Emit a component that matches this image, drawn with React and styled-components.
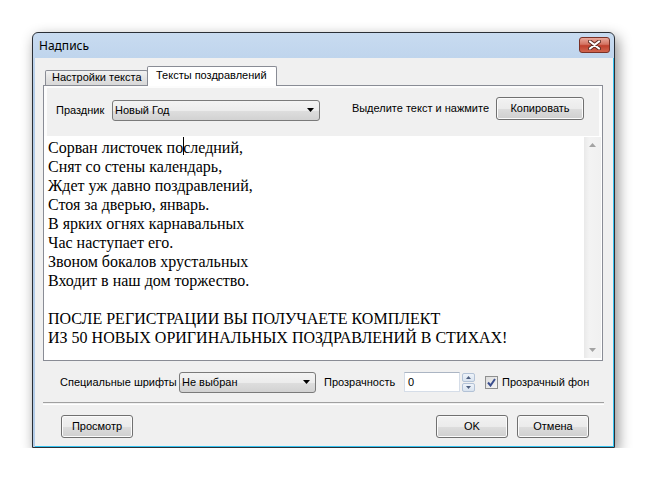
import React from 'react';
import styled, { createGlobalStyle } from 'styled-components';

const GlobalStyle = createGlobalStyle`
  body {
    margin: 0;
    background: #ffffff;
    font-family: "Liberation Sans", Arial, sans-serif;
  }
`;

const Page = styled.div`
  padding: 32px 0 0 32px;
`;

const Window = styled.div`
  width: 583px;
  height: 416px;
  box-sizing: border-box;
  border: 1px solid #2a2f36;
  border-radius: 6px 6px 0 0;
  background: linear-gradient(#c8dbf0, #b3cce8 60px, #b3cce8);
  padding: 0 0 0 2px;
  display: flex;
  flex-direction: column;
  box-shadow: 3px 5px 14px rgba(0, 0, 0, 0.45);
`;

const TitleBar = styled.div`
  height: 25px;
  display: flex;
  align-items: flex-start;
  margin-left: -2px;
  padding: 0 4px 0 6px;
`;

const Title = styled.div`
  font-family: "Noto Sans", "Open Sans", sans-serif;
  font-size: 12px;
  line-height: 16px;
  margin-top: 5px;
  color: #000;
  flex: 1;
`;

const CloseButton = styled.div`
  width: 31px;
  height: 16px;
  margin-top: 4px;
  box-sizing: border-box;
  border: 1px solid #7a3126;
  border-radius: 3px;
  background: linear-gradient(#e9a99c, #d47362 45%, #c0402d 55%, #d0654f);
  display: flex;
  align-items: center;
  justify-content: center;
`;

const Client = styled.div`
  width: 578px;
  height: 388px;
  background: #f0f0f0;
  border-right: 1px solid #35c2f0;
  border-bottom: 1px solid #35c2f0;
  display: flex;
  flex-direction: column;
  padding: 8px 0 0 0;
  box-sizing: content-box;
`;

const TabControl = styled.div`
  margin-left: 8px;
  width: 560px;
  display: flex;
  flex-direction: column;
`;

const TabStrip = styled.div`
  height: 19px;
  display: flex;
  align-items: flex-end;
  padding-left: 2px;
`;

const Tab = styled.div`
  width: ${p => p.$width}px;
  height: ${p => (p.$active ? 20 : 15)}px;
  box-sizing: border-box;
  border: 1px solid #898c95;
  border-bottom: none;
  border-radius: 2px 2px 0 0;
  margin-bottom: ${p => (p.$active ? -1 : 0)}px;
  margin-left: ${p => (p.$active ? -1 : 0)}px;
  position: relative;
  z-index: ${p => (p.$active ? 1 : 0)};
  background: ${p => (p.$active ? '#ffffff' : 'linear-gradient(#f2f2f2, #e3e3e3 50%, #d8d8d8)')};
  font-size: 11px;
  line-height: ${p => (p.$active ? 17 : 13)}px;
  padding-left: ${p => (p.$active ? 8 : 6)}px;
  color: #000;
  white-space: nowrap;
`;

const TabPanel = styled.div`
  height: 276px;
  box-sizing: border-box;
  border: 1px solid #898c95;
  background: #fcfcfc;
  display: flex;
  flex-direction: column;
`;

const ToolBar = styled.div`
  height: 48px;
  margin: 2px 3px 0 3px;
  background: #f0f0f0;
  display: flex;
  align-items: flex-start;
  padding: 9px 15px 0 9px;
  box-sizing: border-box;
`;

const Label = styled.div`
  font-size: 11px;
  line-height: 21px;
  margin-top: ${p => p.$mt || 0}px;
  margin-left: ${p => p.$ml || 0}px;
  width: ${p => (p.$width ? `${p.$width}px` : 'auto')};
  color: #000;
  white-space: nowrap;
  flex-shrink: 0;
`;

const Spacer = styled.div`
  flex: 1;
`;

const Combo = styled.div`
  width: ${p => p.$width}px;
  height: 21px;
  margin-top: ${p => p.$mt || 0}px;
  box-sizing: border-box;
  border: 1px solid #7a7a7a;
  border-radius: 3px;
  background: linear-gradient(#f3f3f3, #ececec 50%, #dedede 51%, #d2d2d2);
  display: flex;
  align-items: center;
  padding: 0 5px 0 2px;
  font-size: 11px;
  color: #000;
  flex-shrink: 0;
`;

const ComboText = styled.span`
  flex: 1;
  white-space: nowrap;
`;

const Button = styled.div`
  width: ${p => p.$width}px;
  height: 23px;
  margin-left: ${p => p.$ml || 0}px;
  box-sizing: border-box;
  border: 1px solid #707070;
  border-radius: 3px;
  background: linear-gradient(#f2f2f2, #ebebeb 50%, #dddddd 51%, #cfcfcf);
  box-shadow: inset 0 0 0 1px #fbfbfb;
  display: flex;
  align-items: center;
  justify-content: center;
  font-size: 11px;
  color: #000;
  flex-shrink: 0;
`;

const Memo = styled.div`
  flex: 1;
  display: flex;
  background: #ffffff;
  min-height: 0;
`;

const MemoText = styled.div`
  flex: 1;
  padding: 2px 0 0 4px;
  font-family: "Liberation Serif", "Times New Roman", serif;
  font-size: 16px;
  line-height: 19px;
  color: #000;
  white-space: pre;
`;

const Line = styled.div`
  height: 19px;
`;

const Caret = styled.span`
  display: inline-block;
  width: 1px;
  height: 18px;
  margin-right: -1px;
  background: #000;
  vertical-align: top;
  position: relative;
  top: -1px;
`;

const Scrollbar = styled.div`
  width: 17px;
  margin: 1px 1px 2px 0;
  background: linear-gradient(90deg, #e9e9e9, #f3f3f3 30%, #f0f0f0);
  display: flex;
  flex-direction: column;
  justify-content: space-between;
  align-items: center;
  padding: 6px 0 6px;
  box-sizing: border-box;
`;

const OptionsRow = styled.div`
  display: flex;
  align-items: center;
  height: 21px;
  margin-top: 11px;
  padding-left: 25px;
`;

const SpinEdit = styled.div`
  width: 56px;
  height: 20px;
  box-sizing: border-box;
  border: 1px solid #d5dde8;
  border-top-color: #abb5c3;
  background: #fff;
  font-size: 11px;
  line-height: 18px;
  padding-left: 3px;
  color: #000;
`;

const SpinButtons = styled.div`
  display: flex;
  flex-direction: column;
  gap: 1px;
  margin-left: 2px;
`;

const SpinButton = styled.div`
  width: 13px;
  height: 9px;
  box-sizing: border-box;
  border: 1px solid #b3c2d6;
  border-radius: 2px;
  background: linear-gradient(#eef3f9, #d9e3ef);
  display: flex;
  align-items: center;
  justify-content: center;
`;

const CheckBox = styled.div`
  width: 13px;
  height: 13px;
  margin-left: 10px;
  box-sizing: border-box;
  border: 1px solid #8e8f8f;
  background: linear-gradient(135deg, #dcdcdc, #f6f6f6);
  display: flex;
  align-items: center;
  justify-content: center;
`;

const Separator = styled.div`
  margin: 9px 9px 0 8px;
  height: 1px;
  border-top: 1px solid #a0a0a0;
  border-bottom: 1px solid #ffffff;
`;

const ButtonRow = styled.div`
  display: flex;
  margin-top: 10px;
  padding: 0 24px 0 26px;
`;

const poem = [
  'Снят со стены календарь,',
  'Ждет уж давно поздравлений,',
  'Стоя за дверью, январь.',
  'В ярких огнях карнавальных',
  'Час наступает его.',
  'Звоном бокалов хрустальных',
  'Входит в наш дом торжество.',
  '',
  'ПОСЛЕ РЕГИСТРАЦИИ ВЫ ПОЛУЧАЕТЕ КОМПЛЕКТ',
  'ИЗ 50 НОВЫХ ОРИГИНАЛЬНЫХ ПОЗДРАВЛЕНИЙ В СТИХАХ!',
];

const DownArrow = ({ color = '#000' }) => (
  <svg width="7" height="4" viewBox="0 0 7 4">
    <polygon points="0,0 7,0 3.5,4" fill={color} />
  </svg>
);

const UpArrow = ({ color = '#000', w = 7, h = 4 }) => (
  <svg width={w} height={h} viewBox={`0 0 ${w} ${h}`}>
    <polygon points={`0,${h} ${w},${h} ${w / 2},0`} fill={color} />
  </svg>
);

const App = () => {
  return (
    <Page>
      <GlobalStyle />
      <Window>
        <TitleBar>
          <Title>Надпись</Title>
          <CloseButton>
            <svg width="13" height="10" viewBox="0 0 13 10">
              <path d="M2 1.5 L11 8.5 M11 1.5 L2 8.5" stroke="#5c2a22" strokeWidth="4" strokeLinecap="round" />
              <path d="M2 1.5 L11 8.5 M11 1.5 L2 8.5" stroke="#ffffff" strokeWidth="2.2" strokeLinecap="round" />
            </svg>
          </CloseButton>
        </TitleBar>
        <Client>
          <TabControl>
            <TabStrip>
              <Tab $width={103}>Настройки текста</Tab>
              <Tab $width={130} $active>Тексты поздравлений</Tab>
            </TabStrip>
            <TabPanel>
              <ToolBar>
                <Label $mt={3} $width={56}>Праздник</Label>
                <Combo $width={208} $mt={3}>
                  <ComboText>Новый Год</ComboText>
                  <DownArrow />
                </Combo>
                <Spacer />
                <Label $mt={1}>Выделите текст и нажмите</Label>
                <Button $width={88} $ml={7}>Копировать</Button>
              </ToolBar>
              <Memo>
                <MemoText>
                  <Line>Сорван листочек по<Caret />следний,</Line>
                  {poem.map((line, i) => (
                    <Line key={i}>{line}</Line>
                  ))}
                </MemoText>
                <Scrollbar>
                  <UpArrow color="#a3a3a3" />
                  <DownArrow color="#a3a3a3" />
                </Scrollbar>
              </Memo>
            </TabPanel>
          </TabControl>
          <OptionsRow>
            <Label $width={119}>Специальные шрифты</Label>
            <Combo $width={137}>
              <ComboText>Не выбран</ComboText>
              <DownArrow />
            </Combo>
            <Label $ml={8} $width={80}>Прозрачность</Label>
            <SpinEdit>0</SpinEdit>
            <SpinButtons>
              <SpinButton><UpArrow color="#4e5f80" w={5} h={3} /></SpinButton>
              <SpinButton>
                <svg width="5" height="3" viewBox="0 0 5 3"><polygon points="0,0 5,0 2.5,3" fill="#4e5f80" /></svg>
              </SpinButton>
            </SpinButtons>
            <CheckBox>
              <svg width="9" height="9" viewBox="0 0 9 9">
                <path d="M1 4.5 L3.5 7.5 L8 1" stroke="#3b4f8f" strokeWidth="2" fill="none" />
              </svg>
            </CheckBox>
            <Label $ml={4}>Прозрачный фон</Label>
          </OptionsRow>
          <Separator />
          <ButtonRow>
            <Button $width={72}>Просмотр</Button>
            <Spacer />
            <Button $width={72}>OK</Button>
            <Button $width={72} $ml={9}>Отмена</Button>
          </ButtonRow>
        </Client>
      </Window>
    </Page>
  );
};

export default App;
